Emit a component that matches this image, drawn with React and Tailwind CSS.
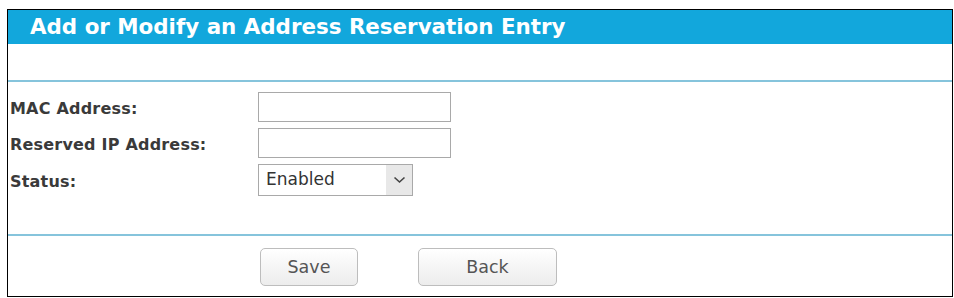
import React from "react";

const font = { fontFamily: '"DejaVu Sans", Verdana, sans-serif' };

const Field = ({ label, children }) => (
  <div className="flex items-center">
    <div className="w-[250px] pl-[2px] pt-[4px] text-[16px] tracking-[0.2px] font-bold text-[#3a3a3a]">{label}</div>
    {children}
  </div>
);

const TextBox = () => (
  <input
    type="text"
    className="w-[193px] h-[30px] border border-[#a9a9a9] bg-white outline-none"
  />
);

export default function App() {
  return (
    <div className="bg-white w-[954px] h-[298px] pt-[9px] pl-[7px]" style={font}>
      <div className="w-[946px] h-[288px] border border-black flex flex-col">
        {/* header */}
        <div className="h-[34px] bg-[#12a7dc] flex items-center pl-[22px]">
          <h1 className="text-white font-bold text-[21.4px] leading-none">
            Add or Modify an Address Reservation Entry
          </h1>
        </div>

        <div className="h-[36px]" />
        <div className="h-[2px] bg-[#86c4dc]" />

        {/* form */}
        <div className="pt-[10px] flex flex-col gap-[6px]">
          <Field label="MAC Address:">
            <TextBox />
          </Field>
          <Field label="Reserved IP Address:">
            <TextBox />
          </Field>
          <Field label="Status:">
            <div className="w-[155px] h-[32px] border border-[#a9a9a9] flex items-center">
              <span className="flex-1 pl-[7px] text-[17px] text-[#333]">Enabled</span>
              <span className="w-[26px] h-full bg-[#e8e8e8] flex items-center justify-center">
                <svg width="13" height="8" viewBox="0 0 13 8" fill="none">
                  <path d="M1.5 1.5 L6.5 6 L11.5 1.5" stroke="#444" strokeWidth="1.6" />
                </svg>
              </span>
            </div>
          </Field>
        </div>

        <div className="h-[38px]" />
        <div className="h-[2px] bg-[#86c4dc]" />

        {/* buttons */}
        <div className="pt-[12px] pl-[252px] flex gap-[60px]">
          <button className="w-[98px] h-[38px] rounded-[5px] border border-[#bdbdbd] bg-gradient-to-b from-white to-[#ececec] text-[17.5px] text-[#555]">
            Save
          </button>
          <button className="w-[139px] h-[38px] rounded-[5px] border border-[#bdbdbd] bg-gradient-to-b from-white to-[#ececec] text-[17.5px] text-[#555]">
            Back
          </button>
        </div>
      </div>
    </div>
  );
}
